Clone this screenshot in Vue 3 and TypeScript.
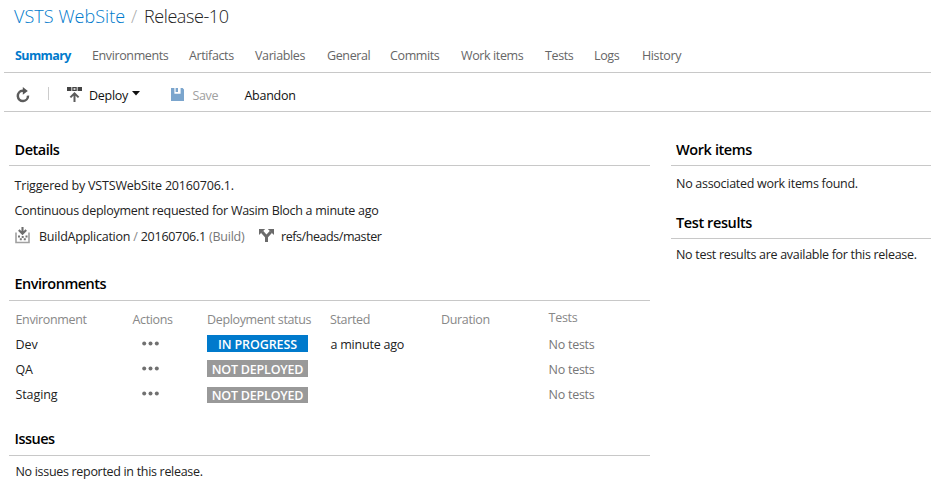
<script setup lang="ts">
interface Environment {
  name: string
  status: string
  active: boolean
  started: string
}

const tabs: string[] = ['Summary', 'Environments', 'Artifacts', 'Variables', 'General', 'Commits', 'Work items', 'Tests', 'Logs', 'History']

const environments: Environment[] = [
  { name: 'Dev', status: 'IN PROGRESS', active: true, started: 'a minute ago' },
  { name: 'QA', status: 'NOT DEPLOYED', active: false, started: '' },
  { name: 'Staging', status: 'NOT DEPLOYED', active: false, started: '' },
]
</script>

<template>
  <div class="page">
    <header class="title">
      <a class="definition">VSTS WebSite</a>
      <span class="slash">/</span>
      <span class="release">Release-10</span>
    </header>

    <nav class="tabs">
      <a v-for="tab in tabs" :key="tab" class="tab" :class="{ selected: tab === 'Summary' }">{{ tab }}</a>
    </nav>

    <div class="toolbar">
      <svg class="refresh" width="14" height="16" viewBox="0 0 14 16">
        <path d="M8.2 3.8H6.6A5.1 5.1 0 1 0 12 8.6" fill="none" stroke="#5c5c5c" stroke-width="2.5" />
        <path d="M6.8 0L11.8 4L6.8 7.8Z" fill="#555" />
      </svg>
      <span class="divider"></span>
      <div class="command deploy">
        <svg width="16" height="16" viewBox="0 0 16 16">
          <path d="M0 0h4.4v4H0zM10.6 0H15v4h-4.4z" fill="#444" />
          <path d="M5.9 .6h3.2v2.8H5.9z" fill="none" stroke="#444" stroke-width="1.3" />
          <path d="M7.5 15V6.5M3.4 10.4L7.5 6.3L11.6 10.4" fill="none" stroke="#5c5c5c" stroke-width="2" />
        </svg>
        <span class="label">Deploy</span>
        <svg class="caret" width="8" height="5" viewBox="0 0 8 5"><path d="M0 0h8L4 4.6z" fill="#111" /></svg>
      </div>
      <div class="command save">
        <svg width="13" height="13" viewBox="0 0 13 13">
          <path d="M0 0h3.4v5.8h6.2V0h2L13 1.4V13H0z" fill="#7ba5cd" />
          <path d="M4.6 0H7v4H4.6z" fill="#7ba5cd" />
        </svg>
        <span class="label">Save</span>
      </div>
      <span class="abandon">Abandon</span>
    </div>

    <main class="content">
      <div class="primary">
        <section class="details">
          <h2>Details</h2>
          <p class="trigger">Triggered by VSTSWebSite 20160706.1.</p>
          <p class="reason">Continuous deployment requested for Wasim Bloch a minute ago</p>
          <div class="source">
            <svg class="build-icon" width="16" height="17" viewBox="0 0 16 17">
              <path d="M7.5 0v6.5M3.8 3l3.7 3.7L11.2 3" fill="none" stroke="#6e6e6e" stroke-width="2.1" />
              <path d="M1 5.5v10h13v-10" fill="none" stroke="#a0a0a0" stroke-width="1.6" />
              <path d="M3 8.5h2v2H3zM10.5 8.5h2v2h-2zM6.7 9h2v2h-2zM4.8 11.3h2v2h-2zM8.8 11.3h2v2h-2z" fill="#777" />
            </svg>
            <span class="build">BuildApplication <i>/</i> 20160706.1 <em>(Build)</em></span>
            <svg class="branch-icon" width="16" height="14" viewBox="0 0 16 14">
              <path d="M3 2.8L7.5 7.8V13M12 2.8L7.5 7.8" fill="none" stroke="#6a6a6a" stroke-width="3" />
              <path d="M0 0h6.2L0 6zM15 0H8.8L15 6z" fill="#6a6a6a" />
            </svg>
            <span class="branch">refs/heads/master</span>
          </div>
        </section>

        <section class="environments">
          <h2>Environments</h2>
          <div class="row head">
            <span class="h-env">Environment</span>
            <span class="h-act">Actions</span>
            <span class="h-status">Deployment status</span>
            <span class="h-start">Started</span>
            <span class="h-dur">Duration</span>
            <span class="h-tests">Tests</span>
          </div>
          <div v-for="env in environments" :key="env.name" class="row">
            <span class="name">{{ env.name }}</span>
            <svg class="more" width="17" height="5" viewBox="0 0 17 5">
              <circle cx="2.2" cy="2.5" r="2" /><circle cx="8.5" cy="2.5" r="2" /><circle cx="14.8" cy="2.5" r="2" />
            </svg>
            <span class="badge" :class="{ active: env.active }">{{ env.status }}</span>
            <span class="started">{{ env.started }}</span>
            <span></span>
            <span class="tests">No tests</span>
          </div>
        </section>

        <section class="issues">
          <h2>Issues</h2>
          <p>No issues reported in this release.</p>
        </section>
      </div>

      <aside class="secondary">
        <section class="work-items">
          <h2>Work items</h2>
          <p>No associated work items found.</p>
        </section>
        <section class="test-results">
          <h2>Test results</h2>
          <p>No test results are available for this release.</p>
        </section>
      </aside>
    </main>
  </div>
</template>

<style>
body { margin: 0; background: #fff; }
</style>

<style scoped>
.page {
  box-sizing: border-box;
  height: 489px;
  overflow: hidden;
  font: 12.5px/20px "Open Sans", "Noto Sans", sans-serif;
  letter-spacing: -0.28px;
  color: #222;
  white-space: nowrap;
}
.title { display: flex; height: 32px; padding-left: 14px; font-size: 18px; line-height: 32px; font-weight: 300; }
.definition { width: 117px; color: #007acc; letter-spacing: 0.05px; }
.slash { width: 13px; color: #aaa; }
.release { color: #222; letter-spacing: -0.42px; }

.tabs {
  display: grid;
  grid-template-columns: 77px 97px 66px 72px 63px 71px 84px 49px 48px 60px;
  height: 26px;
  margin-left: 4px;
  padding: 14px 0 0 11px;
  border-bottom: 1px solid #c8c8c8;
  color: #666;
}
.tab { letter-spacing: -0.38px; }
.tab.selected { color: #007acc; font-weight: 700; letter-spacing: -0.6px; }

.toolbar {
  display: flex;
  align-items: center;
  height: 32px;
  margin-left: 4px;
  padding: 6px 0 0 12px;
  border-bottom: 1px solid #c8c8c8;
}
.divider { width: 1px; height: 13px; margin: 0 18px 3px 18px; background: #ccc; }
.command { display: flex; align-items: center; color: #111; }
.label, .abandon { padding-top: 2px; }
.deploy { width: 104px; }
.deploy .label { width: 43px; margin-left: 6px; }
.deploy .caret { margin-bottom: 3px; }
.save { width: 73.5px; color: #a0a0a0; }
.save svg { margin-bottom: 2px; }
.save .label { margin-left: 8.5px; letter-spacing: -0.35px; }
.abandon { color: #111; }

.content { display: grid; grid-template-columns: 641px 260px; column-gap: 21px; padding: 28px 0 0 9px; }
h2 { margin: 0; height: 25px; padding-left: 5.5px; border-bottom: 1px solid #c8c8c8; font-size: 14.5px; line-height: 20px; font-weight: 600; letter-spacing: -0.5px; color: #000; }
.secondary h2 { padding-left: 5px; letter-spacing: -0.4px; }
p { margin: 0; padding-left: 5px; }
.details { height: 134px; }
.details p { padding-left: 5.5px; line-height: 25px; }
.trigger { padding-top: 7px; letter-spacing: -0.18px; }
.details .reason { letter-spacing: -0.28px; }
.source { display: flex; align-items: center; height: 27px; padding-left: 6px; }
.build { width: 220px; margin-left: 8px; letter-spacing: -0.23px; }
.build i { font-style: normal; color: #888; }
.build em { font-style: normal; color: #777; }
.build-icon { margin-bottom: 3px; }
.branch-icon { margin-bottom: 2px; }
.branch { margin-left: 6px; letter-spacing: -0.43px; }

.environments { height: 155px; }
.environments h2 { height: 26px; margin-bottom: 6px; }
.row { display: grid; grid-template-columns: 117px 75px 123px 111px 107px 90px; align-items: center; height: 25px; padding-left: 6px; }
.head { color: #888; letter-spacing: -0.35px; }
.h-env, .name { padding-left: 0.5px; }
.h-act { padding-left: 0.5px; }
.h-tests { margin-top: -4px; }
.name { letter-spacing: -0.1px; }
.started { padding-left: 0.5px; letter-spacing: -0.22px; }
.more { margin: 0 0 2px 10px; fill: #707070; }
.badge { box-sizing: border-box; width: 101px; height: 17px; margin-bottom: 2px; background: #999; color: #fff; font-weight: 600; line-height: 19px; text-align: center; letter-spacing: -0.2px; }
.badge.active { background: #007acc; letter-spacing: -0.1px; }
.row:last-child .badge { height: 16px; margin-bottom: 0; line-height: 17px; }
.tests, .h-tests { padding-left: 0.5px; letter-spacing: -0.25px; }
.tests { color: #777; }
.issues h2 { height: 26px; }
.issues p { padding: 6px 0 0 6.5px; letter-spacing: -0.31px; }

.work-items { height: 73px; }
.work-items p { padding-top: 8px; }
.test-results p { padding-top: 6px; letter-spacing: -0.3px; }
</style>
